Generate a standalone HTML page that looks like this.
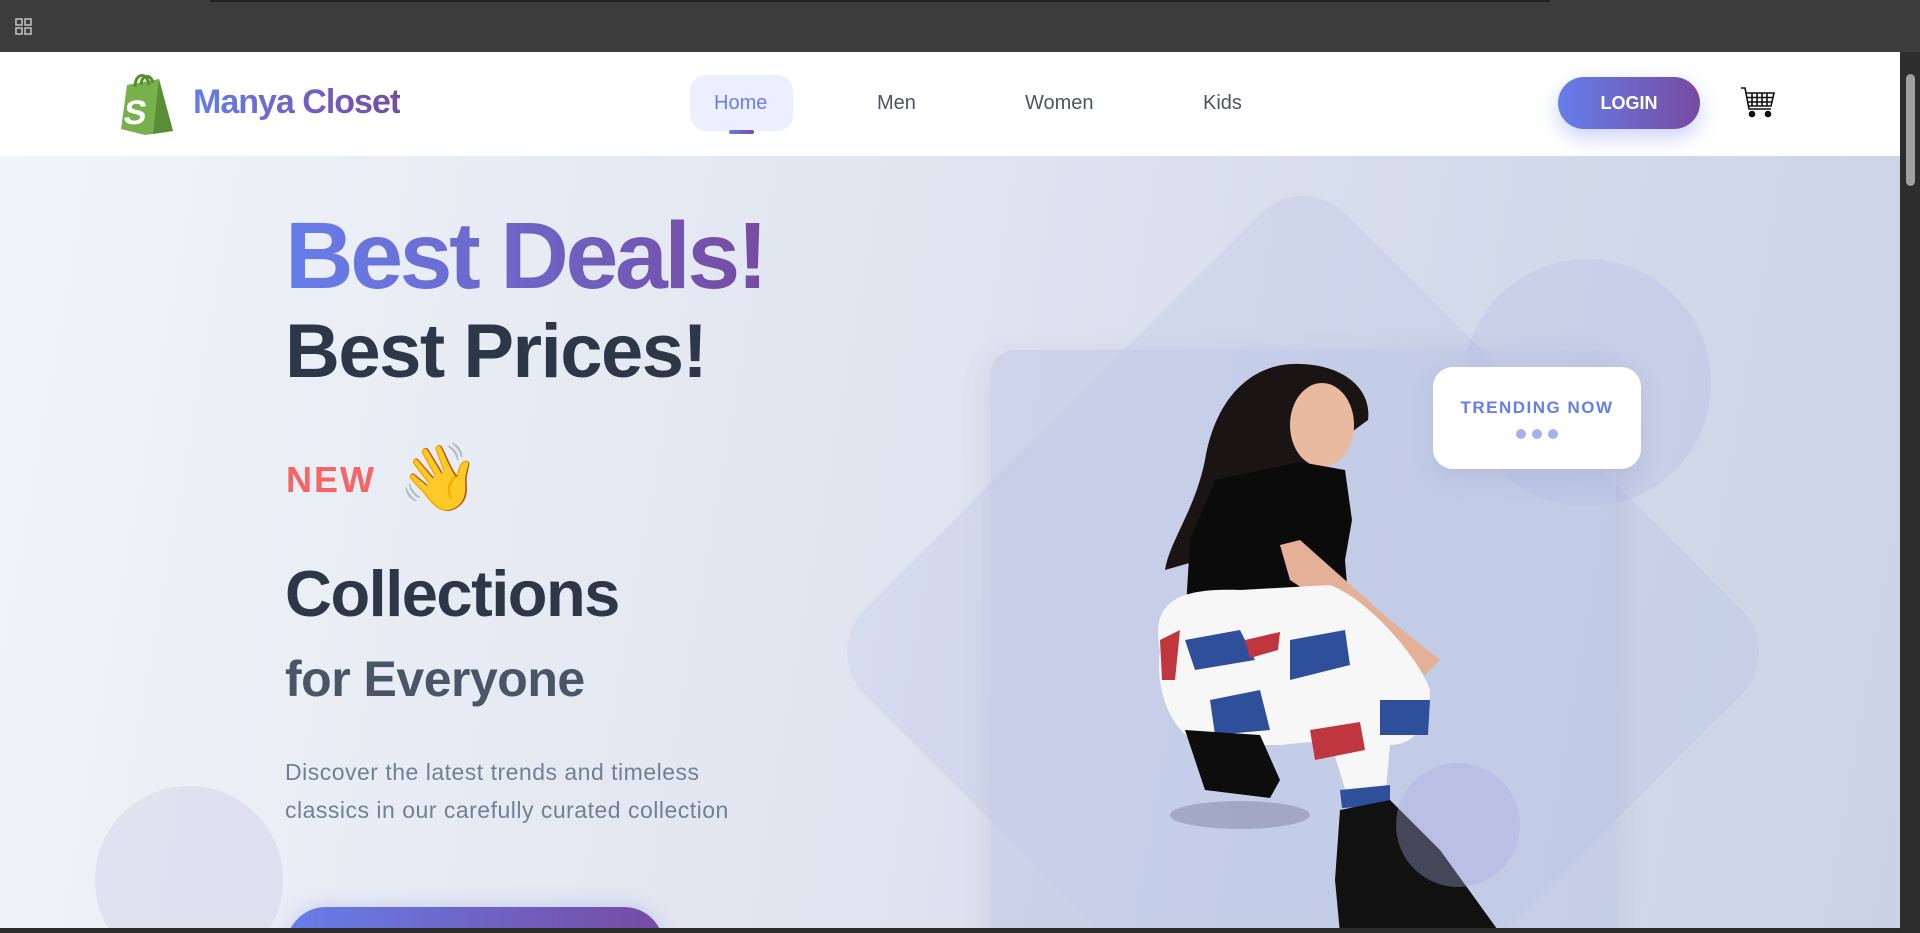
<!DOCTYPE html>
<html><head><meta charset="utf-8">
<style>
*{margin:0;padding:0;box-sizing:border-box}
html,body{width:1920px;height:933px;overflow:hidden;font-family:"Liberation Sans",Roboto,sans-serif}
.top{position:absolute;left:0;top:0;width:1920px;height:52px;background:#3c3c3c}
.nav{position:absolute;left:0;top:52px;width:1900px;height:104px;background:#fff}
.hero{position:absolute;left:0;top:156px;width:1900px;height:777px;background:linear-gradient(100deg,#f1f4f9 0%,#e2e7f1 40%,#d5dcec 70%,#cad3e6 100%);overflow:hidden}
.grad{background:linear-gradient(90deg,#667eea,#764ba2);-webkit-background-clip:text;background-clip:text;color:transparent}
.nl{position:absolute;font-size:20px;color:#4a5568}
.abs{position:absolute}
</style></head><body>
<div class="top">
 <svg class="abs" style="left:15px;top:18px" width="18" height="18" viewBox="0 0 18 18" fill="none" stroke="#bbb" stroke-width="1.6"><rect x="1" y="1" width="6" height="6"/><rect x="10" y="1" width="6" height="6"/><rect x="1" y="10" width="6" height="6"/><rect x="10" y="10" width="6" height="6"/></svg>
 <div class="abs" style="left:210px;top:0;width:1340px;height:2px;background:#222"></div>
</div>
<div class="nav">
 <svg class="abs" style="left:119px;top:19px" width="56" height="64" viewBox="0 0 56 64"><path d="M8 14 L40 8 L54 60 L26 64 L2 58 Z" fill="#78b04b"/><path d="M40 8 L54 60 L34 63 Z" fill="#5a8e36"/><path d="M16 16 C16 2 28 0 30 14" fill="none" stroke="#5a8e36" stroke-width="3"/><path d="M22 14 C22 4 32 2 34 12" fill="none" stroke="#5a8e36" stroke-width="3"/><text x="11" y="53" font-family="Liberation Sans" font-weight="bold" font-size="34" fill="#fff" transform="skewX(-8)">S</text></svg>
 <div class="abs grad" style="left:193px;top:31px;font-size:34px;font-weight:bold;letter-spacing:-1px">Manya Closet</div>
 <div class="abs" style="left:690px;top:23px;width:103px;height:56px;background:#ecefff;border-radius:16px"></div>
 <div class="abs" style="left:714px;top:40px;font-size:20px;color:#667eea">Home</div>
 <div class="abs" style="left:729px;top:78px;width:25px;height:4px;border-radius:2px;background:linear-gradient(90deg,#667eea,#764ba2)"></div>
 <div class="nl" style="left:877px;top:40px">Men</div>
 <div class="nl" style="left:1025px;top:40px">Women</div>
 <div class="nl" style="left:1203px;top:40px">Kids</div>
 <div class="abs" style="left:1558px;top:25px;width:142px;height:52px;border-radius:26px;background:linear-gradient(90deg,#667eea,#764ba2);box-shadow:0 8px 20px rgba(102,126,234,.35);color:#fff;font-weight:bold;font-size:18px;text-align:center;line-height:52px">LOGIN</div>
 <svg class="abs" style="left:1740px;top:33px" width="36" height="36" viewBox="0 0 36 36" fill="none" stroke="#111" stroke-width="1.6"><path d="M1 3 H5 L9 24 H31"/><path d="M6 8 H34 L31 21 H9"/><path d="M12 8 V21 M17 8 V21 M22 8 V21 M27 8 V21 M7 12.5 H33 M8 17 H32"/><circle cx="12" cy="29" r="2.5" fill="#111"/><circle cx="28" cy="29" r="2.5" fill="#111"/></svg>
</div>
<div class="hero">
 <div class="abs" style="left:95px;top:630px;width:188px;height:188px;border-radius:50%;background:rgba(190,185,225,.25)"></div>
 <div class="abs" style="left:963px;top:156px;width:680px;height:680px;border-radius:60px;background:rgba(150,160,220,.13);transform:rotate(45deg)"></div>
 <div class="abs" style="left:1463px;top:103px;width:248px;height:248px;border-radius:50%;background:rgba(150,150,220,.14)"></div>
 <div class="abs" style="left:991px;top:194px;width:625px;height:650px;border-radius:24px;background:rgba(190,198,230,.55);box-shadow:0 10px 30px rgba(100,110,160,.15)"></div>
 <svg class="abs" style="left:0;top:-156px" width="1900" height="933" viewBox="0 0 1900 933">
  <ellipse cx="1240" cy="815" rx="70" ry="14" fill="rgba(60,60,90,.25)"/>
  <path d="M1300 364 C1250 362 1215 400 1205 460 C1195 510 1170 540 1165 570 L1200 560 L1300 470 L1368 420 C1372 390 1345 365 1300 364Z" fill="#1a1414"/>
  <ellipse cx="1322" cy="425" rx="32" ry="42" fill="#e9b9a0"/>
  <path d="M1300 462 L1345 470 L1352 520 L1345 560 L1350 620 L1185 625 L1190 540 L1215 480Z" fill="#0b0b0b"/>
  <path d="M1280 545 L1300 540 L1390 620 L1440 660 L1425 675 L1380 640 L1290 580Z" fill="#e4b098"/>
  <path d="M1160 650 C1150 600 1180 588 1240 590 L1330 585 C1370 600 1420 660 1430 690 C1430 730 1410 745 1390 745 L1385 800 L1350 805 L1330 740 L1280 745 L1200 745 C1170 730 1155 690 1160 650Z" fill="#f7f7f7"/>
  <path d="M1185 640 L1240 630 L1255 660 L1195 670Z M1290 640 L1345 630 L1350 665 L1290 680Z M1210 700 L1260 690 L1270 730 L1215 735Z M1380 700 L1430 700 L1428 735 L1380 735Z M1340 790 L1390 785 L1390 805 L1342 808Z" fill="#2f4f9a"/>
  <path d="M1245 640 L1280 632 L1278 650 L1250 658Z M1310 730 L1360 722 L1365 750 L1315 760Z M1160 640 L1180 630 L1175 680 L1162 680Z" fill="#c0363f"/>
  <path d="M1185 730 L1260 735 L1280 780 L1270 798 L1205 790 Z" fill="#0d0d0d"/>
  <path d="M1340 810 L1390 800 L1440 850 L1500 933 L1340 933 L1335 880Z" fill="#111"/>
 </svg>
 <div class="abs" style="left:1433px;top:211px;width:208px;height:102px;border-radius:20px;background:#fff;box-shadow:0 8px 24px rgba(100,110,170,.15)"></div>
 <div class="abs" style="left:1433px;top:242px;width:208px;text-align:center;font-size:17px;color:#667eea;font-weight:bold;letter-spacing:1.5px">TRENDING NOW</div>
 <div class="abs" style="left:1516px;top:273px;width:10px;height:10px;border-radius:50%;background:#a3b1f0"></div>
 <div class="abs" style="left:1532px;top:273px;width:10px;height:10px;border-radius:50%;background:#a3b1f0"></div>
 <div class="abs" style="left:1548px;top:273px;width:10px;height:10px;border-radius:50%;background:#a3b1f0"></div>
 <div class="abs" style="left:1396px;top:607px;width:124px;height:124px;border-radius:50%;background:rgba(170,170,225,.35)"></div>

 <div class="abs grad" style="left:285px;top:43px;font-size:95px;font-weight:bold;letter-spacing:-3.4px;line-height:114px">Best Deals!</div>
 <div class="abs" style="left:285px;top:150px;font-size:76px;font-weight:bold;color:#2d3748;line-height:92px;letter-spacing:-1.5px">Best Prices!</div>
 <div class="abs" style="left:286px;top:302px;font-size:36px;font-weight:bold;color:#f56565;letter-spacing:2px;line-height:44px">NEW</div>
 <div class="abs" style="left:398px;top:283px;font-size:66px;line-height:80px;font-family:'Noto Color Emoji',sans-serif">👋</div>
 <div class="abs" style="left:285px;top:398px;font-size:65px;font-weight:bold;color:#2d3748;line-height:80px;letter-spacing:-1.5px">Collections</div>
 <div class="abs" style="left:285px;top:492px;font-size:50px;font-weight:bold;color:#4a5568;line-height:62px;letter-spacing:-0.5px">for Everyone</div>
 <div class="abs" style="left:285px;top:597px;font-size:23px;color:#718096;line-height:38px;letter-spacing:0.5px">Discover the latest trends and timeless<br>classics in our carefully curated collection</div>
 <div class="abs" style="left:286px;top:751px;width:378px;height:80px;border-radius:40px;background:linear-gradient(90deg,#667eea,#764ba2);box-shadow:0 0 20px rgba(102,126,234,.3)"></div>
</div>
<div class="abs" style="left:1900px;top:52px;width:20px;height:881px;background:#2d2d2d"></div>
<div class="abs" style="left:1906px;top:74px;width:9px;height:112px;border-radius:5px;background:#a0a0a0"></div>
<div class="abs" style="left:0;top:928px;width:1900px;height:5px;background:#2b2b2b"></div>
</body></html>
